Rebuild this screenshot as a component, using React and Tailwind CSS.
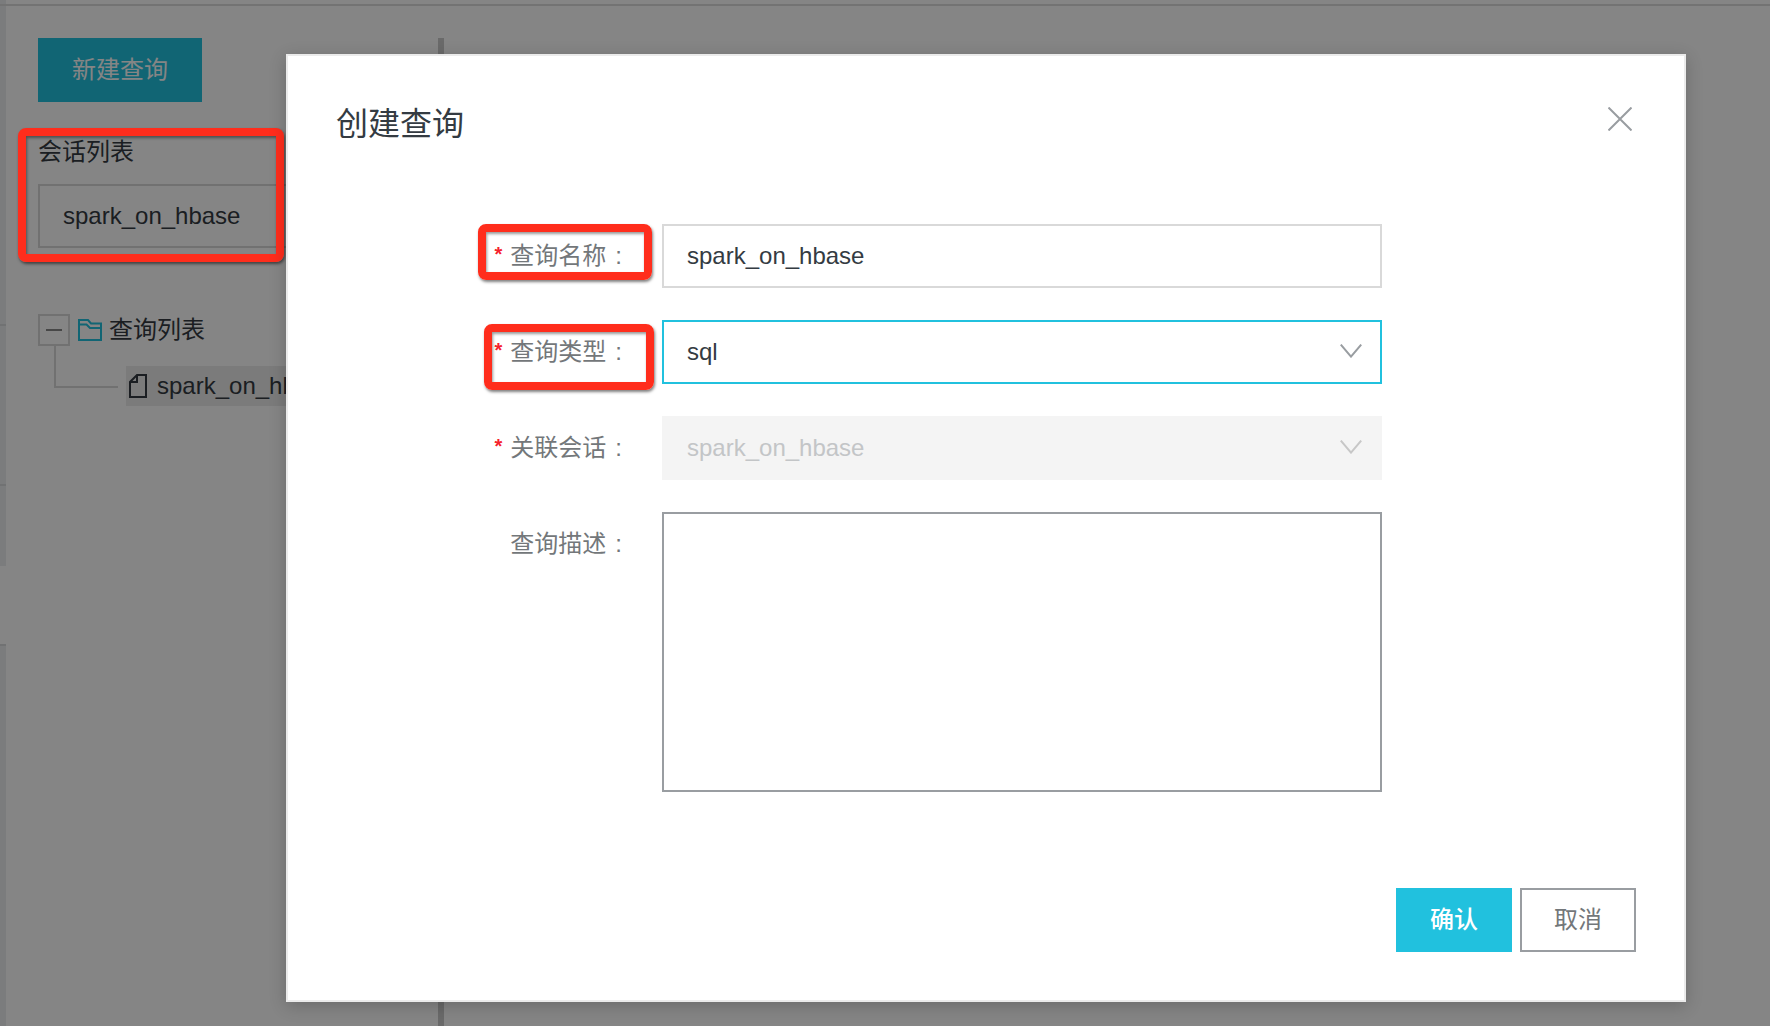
import React from "react";

const highlight =
  "pointer-events-none absolute rounded-lg border-8 border-[#ff2d1c] shadow-[1px_2px_3px_rgba(0,0,0,0.5),inset_1px_2px_3px_rgba(0,0,0,0.4)]";

const fieldBox =
  "block h-16 w-full appearance-none rounded-none border-2 px-[23px] text-2xl outline-none";

const ChevronIcon = ({ className }) => (
  <svg
    className={`pointer-events-none absolute top-6 right-5 h-[14px] w-[22px] ${className}`}
    viewBox="0 0 22 14"
    fill="none"
    stroke="currentColor"
    strokeWidth="2"
  >
    <path d="M0.8 0.6 L11 12.6 L21.2 0.6" />
  </svg>
);

const FolderIcon = () => (
  <svg
    className="h-[22px] w-6 text-[#21c1de]"
    viewBox="0 0 24 22"
    fill="none"
    stroke="currentColor"
    strokeWidth="2"
  >
    <path d="M1 21V1h9l3 3.5h10V21z" />
    <path d="M1 5.5h7.5L12 9h11" />
  </svg>
);

const FileIcon = () => (
  <svg
    className="h-6 w-[18px]"
    viewBox="0 0 18 24"
    fill="none"
    stroke="currentColor"
    strokeWidth="2"
  >
    <path d="M8 1h9v22H1V8z" />
    <path d="M8 1v7H1" />
  </svg>
);

const FormRow = ({ id, label, required, mark, children }) => (
  <div className="flex items-start">
    <div className="relative flex h-16 w-[326px] shrink-0 items-center justify-end pr-10 text-2xl text-[#73777a]">
      {required && (
        <span className="mr-2 h-8 text-xl font-bold text-[#f5222d]">*</span>
      )}
      <label htmlFor={id}>{label}</label>
      <span className="ml-[9px]">:</span>
      {mark && <span className={`${highlight} ${mark}`} />}
    </div>
    <div className="relative flex-1">{children}</div>
  </div>
);

const Sidebar = () => (
  <aside className="flex-1 pt-8 pr-8 pl-8">
    <button className="h-16 bg-[#21c1de] px-[34px] text-2xl text-white">
      新建查询
    </button>
    <div className="mt-[34px] flex h-8 items-center text-2xl">
      <label htmlFor="session">会话列表</label>
    </div>
    <select
      id="session"
      className={`${fieldBox} mt-4 border-[#d9d9d9] bg-white`}
    >
      <option>spark_on_hbase</option>
    </select>

    <div className="mt-[66px] flex h-8 items-center">
      <button
        aria-label="collapse"
        className="flex h-8 w-8 items-center justify-center border-2 border-[#d9d9d9]"
      >
        <span className="h-[2px] w-4 bg-[#888]" />
      </button>
      <span className="ml-2">
        <FolderIcon />
      </span>
      <span className="ml-[7px] text-2xl">查询列表</span>
    </div>
    <div className="flex">
      <div className="ml-4 h-[42px] w-16 border-b-2 border-l-2 border-[#d9d9d9]" />
      <div className="mt-5 ml-2 flex h-10 flex-1 items-center bg-[#ececec] pl-[3px]">
        <FileIcon />
        <span className="ml-[10px] text-2xl">spark_on_hbase</span>
      </div>
    </div>
  </aside>
);

const CreateQueryDialog = () => (
  <div
    role="dialog"
    aria-labelledby="dialog-title"
    className="relative mt-[54px] mr-[84px] mb-6 ml-[286px] border-2 border-[#ebebeb] bg-white p-12 shadow-[0_4px_16px_rgba(0,0,0,0.2)]"
  >
    <div className="flex h-10 items-start justify-between">
      <h1 id="dialog-title" className="text-[32px] leading-10">
        创建查询
      </h1>
      <button aria-label="close" className="mt-[3px] mr-1 text-[#999da1]">
        <svg
          className="h-6 w-6"
          viewBox="0 0 24 24"
          stroke="currentColor"
          strokeWidth="2"
        >
          <path d="M0.5 0.5 L23.5 23.5 M23.5 0.5 L0.5 23.5" />
        </svg>
      </button>
    </div>

    <form className="mt-20 mr-[254px] flex flex-col gap-8">
      <FormRow
        id="name"
        label="查询名称"
        required
        mark="top-0 right-[10px] h-14 w-[174px]"
      >
        <input
          id="name"
          defaultValue="spark_on_hbase"
          className={`${fieldBox} border-[#d9d9d9]`}
        />
      </FormRow>
      <FormRow
        id="type"
        label="查询类型"
        required
        mark="top-1 right-2 h-[66px] w-[170px]"
      >
        <select id="type" className={`${fieldBox} border-[#21c1de]`}>
          <option>sql</option>
        </select>
        <ChevronIcon className="text-[#999da1]" />
      </FormRow>
      <FormRow id="linked" label="关联会话" required>
        <select
          id="linked"
          disabled
          className={`${fieldBox} border-[#f4f4f4] bg-[#f4f4f4] text-[#c3c5c7] opacity-100`}
        >
          <option>spark_on_hbase</option>
        </select>
        <ChevronIcon className="text-[#c7c7c7]" />
      </FormRow>
      <FormRow id="desc" label="查询描述">
        <textarea
          id="desc"
          className="block h-[280px] w-full resize-none border-2 border-[#999da1] px-[23px] py-3 text-2xl outline-none"
        />
      </FormRow>
    </form>

    <div className="mt-24 flex justify-end gap-2 text-2xl">
      <button className="h-16 w-[116px] bg-[#21c1de] font-medium text-white">
        确认
      </button>
      <button className="h-16 w-[116px] border-2 border-[#999da1] text-[#73777a]">
        取消
      </button>
    </div>
  </div>
);

const App = () => {
  return (
    <div className="relative min-h-screen overflow-hidden bg-white font-['Liberation_Sans','Noto_Sans_CJK_SC',sans-serif] text-[#343b42]">
      {/* page behind the dialog */}
      <div className="absolute inset-0 flex">
        <div className="flex w-[6px] flex-col">
          <div className="h-[324px] bg-[#ebedf0]" />
          <div className="h-40 border-t-2 border-[#d9dadc] bg-[#ebedf0]" />
          <div className="h-[82px] border-t-2 border-[#d9dadc] bg-[#ebedf0]" />
          <div className="h-[78px]" />
          <div className="flex-1 border-t-2 border-[#d9dadc] bg-[#ebedf0]" />
        </div>
        <div className="flex w-[438px] pt-[6px]">
          <Sidebar />
          <div className="mt-8 w-[6px] bg-[#ccc]" />
        </div>
        <div className="absolute inset-x-0 top-1 h-[2px] bg-[#dcdcdc]" />
      </div>
      <div className="absolute inset-0 bg-black/48" />
      <div className={`${highlight} top-32 left-[18px] h-[134px] w-[266px]`} />
      <CreateQueryDialog />
    </div>
  );
};

export default App;
